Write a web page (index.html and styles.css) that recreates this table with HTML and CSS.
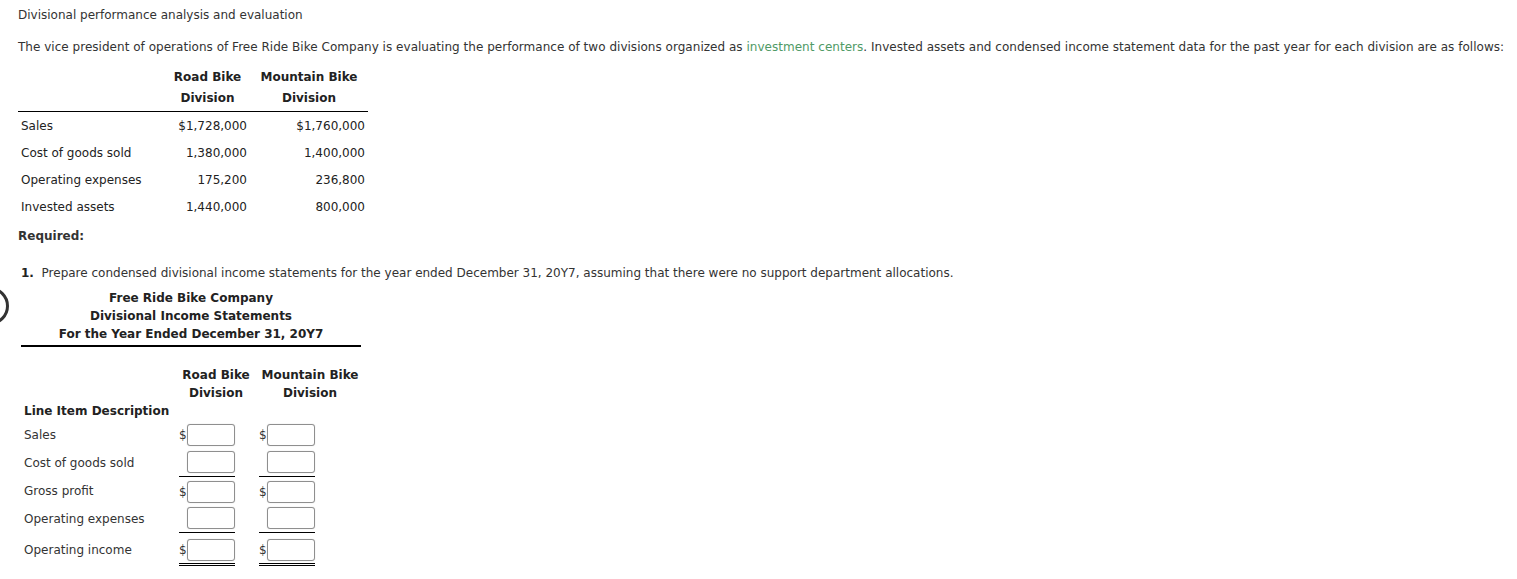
FILE: index.html
```html
<!DOCTYPE html>
<html>
<head>
<meta charset="utf-8">
<link rel="stylesheet" href="styles.css">
</head>
<body>
<div class="page">
  <div class="title">Divisional performance analysis and evaluation</div>
  <p class="intro">The vice president of operations of Free Ride Bike Company is evaluating the performance of two divisions organized as <span class="term">investment centers</span>. Invested assets and condensed income statement data for the past year for each division are as follows:</p>

  <table class="data">
    <colgroup><col class="c-label"><col class="c-road"><col class="c-mtn"></colgroup>
    <thead>
      <tr class="h1"><th></th><th>Road Bike</th><th>Mountain Bike</th></tr>
      <tr class="h2"><th></th><th>Division</th><th>Division</th></tr>
    </thead>
    <tbody>
      <tr><td class="lbl">Sales</td><td class="num">$1,728,000</td><td class="num">$1,760,000</td></tr>
      <tr><td class="lbl">Cost of goods sold</td><td class="num">1,380,000</td><td class="num">1,400,000</td></tr>
      <tr><td class="lbl">Operating expenses</td><td class="num">175,200</td><td class="num">236,800</td></tr>
      <tr><td class="lbl">Invested assets</td><td class="num">1,440,000</td><td class="num">800,000</td></tr>
    </tbody>
  </table>

  <div class="required">Required:</div>

  <div class="question"><b>1.</b>&nbsp; Prepare condensed divisional income statements for the year ended December 31, 20Y7, assuming that there were no support department allocations.</div>

  <div class="marker"></div>

  <div class="stmt-head">
    <div>Free Ride Bike Company</div>
    <div>Divisional Income Statements</div>
    <div>For the Year Ended December 31, 20Y7</div>
  </div>

  <table class="entry">
    <colgroup><col class="e-label"><col class="e-road"><col class="e-mtn"></colgroup>
    <thead>
      <tr><th></th><th>Road Bike</th><th>Mountain Bike</th></tr>
      <tr><th></th><th>Division</th><th>Division</th></tr>
      <tr class="lid"><th class="lbl">Line Item Description</th><th></th><th></th></tr>
    </thead>
    <tbody>
      <tr class="r-a">
        <td class="lbl">Sales</td>
        <td><div class="amt"><span class="cur">$</span><input type="text"></div></td>
        <td><div class="amt"><span class="cur">$</span><input type="text"></div></td>
      </tr>
      <tr class="r-b">
        <td class="lbl">Cost of goods sold</td>
        <td><div class="amt single"><span class="cur"></span><input type="text"></div></td>
        <td><div class="amt single"><span class="cur"></span><input type="text"></div></td>
      </tr>
      <tr class="r-c">
        <td class="lbl">Gross profit</td>
        <td><div class="amt"><span class="cur">$</span><input type="text"></div></td>
        <td><div class="amt"><span class="cur">$</span><input type="text"></div></td>
      </tr>
      <tr class="r-d">
        <td class="lbl">Operating expenses</td>
        <td><div class="amt single"><span class="cur"></span><input type="text"></div></td>
        <td><div class="amt single"><span class="cur"></span><input type="text"></div></td>
      </tr>
      <tr class="r-e">
        <td class="lbl">Operating income</td>
        <td><div class="amt double"><span class="cur">$</span><input type="text"></div></td>
        <td><div class="amt double"><span class="cur">$</span><input type="text"></div></td>
      </tr>
    </tbody>
  </table>
</div>
</body>
</html>
```

FILE: styles.css
```css
html, body {
  margin: 0;
  padding: 0;
  background: #fff;
}
body {
  font-family: "DejaVu Sans", Verdana, sans-serif;
  font-size: 12px;
  color: #333;
}
.page {
  position: relative;
  padding: 7px 0 0 18px;
}
.title {
  line-height: 16px;
}
.intro {
  margin: 16px 0 0 0;
  line-height: 16px;
  letter-spacing: 0.025px;
}
.term {
  color: #4f9a66;
}
table {
  border-collapse: collapse;
  table-layout: fixed;
}
th, td {
  padding: 0;
}
.data {
  margin-top: 12px;
  width: 350px;
}
.c-label { width: 147px; }
.c-road { width: 85px; }
.c-mtn { width: 118px; }
.data th {
  font-weight: bold;
  color: #222;
  text-align: center;
  line-height: 21px;
  white-space: nowrap;
}
.data .h2 th {
  padding-bottom: 2px;
  border-bottom: 1px solid #000;
}
.data td {
  height: 27px;
  color: #222;
}
.data .lbl {
  padding-left: 3px;
}
.data .num {
  text-align: right;
  padding-right: 3px;
}
.required {
  margin-top: 8px;
  line-height: 16px;
  font-weight: bold;
}
.question {
  margin: 21px 0 0 3px;
  line-height: 16px;
}
.question b {
  color: #222;
}
.marker {
  position: absolute;
  left: -29px;
  top: 287px;
  width: 32px;
  height: 32px;
  border: 3px solid #333;
  border-radius: 50%;
}
.stmt-head {
  margin: 8px 0 0 3px;
  width: 340px;
  text-align: center;
  font-weight: bold;
  color: #222;
  line-height: 18px;
  padding-bottom: 2px;
  border-bottom: 2px solid #000;
}
.entry {
  margin: 19px 0 0 3px;
  width: 343px;
}
.e-label { width: 155px; }
.e-road { width: 80px; }
.e-mtn { width: 108px; }
.entry th {
  font-weight: bold;
  color: #222;
  text-align: center;
  line-height: 18px;
  white-space: nowrap;
}
.entry .lid th {
  padding-bottom: 2px;
}
.entry th.lbl {
  text-align: left;
  padding-left: 3px;
}
.entry td.lbl {
  padding-left: 3px;
  vertical-align: middle;
  color: #333;
}
.amt {
  display: flex;
  align-items: center;
  width: 56px;
  margin-left: 3px;
  padding: 2px 0;
}
.amt.single {
  padding-bottom: 3px;
  border-bottom: 1px solid #000;
}
.amt.double {
  padding-bottom: 2px;
  border-bottom: 3px double #000;
}
.r-b .amt { padding-top: 3px; }
.r-c .amt { padding-top: 4px; }
.r-e .amt { padding-top: 6px; }
.cur {
  width: 8px;
  font-size: 12px;
  color: #333;
  line-height: 22px;
}
.amt input {
  box-sizing: border-box;
  width: 48px;
  height: 22px;
  margin: 0;
  padding: 0 3px;
  border: 1px solid #8f8f8f;
  border-radius: 3px;
  background: #fff;
  box-shadow: 0 0 1px rgba(0,0,0,0.25);
  font-family: inherit;
  font-size: 12px;
}
```
